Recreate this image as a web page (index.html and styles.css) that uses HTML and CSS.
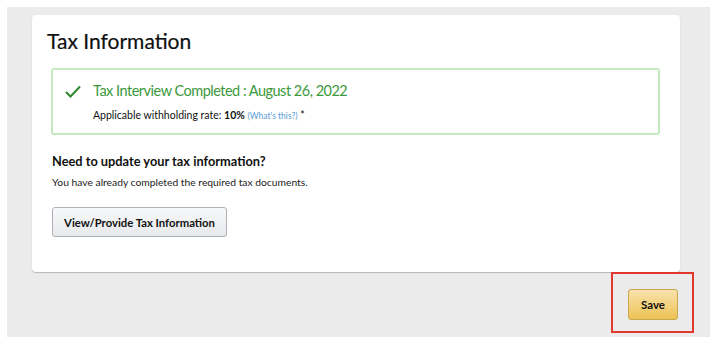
FILE: index.html
```
<!DOCTYPE html>
<html>
<head>
<meta charset="utf-8">
<link rel="stylesheet" href="styles.css">
</head>
<body>
<div class="page">
  <div class="card">
    <h1 class="title">Tax Information</h1>
    <div class="status">
      <div class="status-head">
        <svg class="check" width="16" height="13" viewBox="0 0 16 13"><path d="M1 7 L5.5 11.5 L15 1.5" fill="none" stroke="#2f8a2f" stroke-width="2"/></svg>
        <span class="status-title">Tax Interview Completed : August 26, 2022</span>
      </div>
      <div class="status-rate">Applicable withholding rate: <b>10%</b> <a class="help">(What's this?)</a> *</div>
    </div>
    <div class="update">
      <h2 class="update-title">Need to update your tax information?</h2>
      <p class="update-text">You have already completed the required tax documents.</p>
      <button class="btn">View/Provide Tax Information</button>
    </div>
  </div>
  <div class="footer">
    <button class="save">Save</button>
    <div class="highlight"></div>
  </div>
</div>
</body>
</html>
```
FILE: styles.css
```
* { box-sizing: border-box; }
body {
  margin: 0;
  background: #fff;
  font-family: Lato, "Noto Sans", sans-serif;
  color: #111;
}
.page {
  margin: 7px 0 0 7px;
  width: 703px;
  height: 330px;
  background: #ebebeb;
  padding: 8px 30px 0 25px;
}
.card {
  background: #fff;
  height: 257px;
  border-radius: 4px;
  box-shadow: 0 1px 1px rgba(0,0,0,0.22);
  padding: 12px 20px 0 15px;
}
.title {
  margin: 0;
  font-size: 21px;
  line-height: 27px;
  font-weight: 400;
  color: #0f1111;
  -webkit-text-stroke: 0.2px #0f1111;
}
.status {
  margin: 14px 0 0 4px;
  height: 67px;
  border: 2px solid #c4eabf;
  border-radius: 3px;
  padding: 11px 0 0 12px;
}
.status-head {
  display: flex;
  align-items: center;
  gap: 12px;
}
.check { display: block; }
.status-title {
  font-size: 14.5px;
  letter-spacing: -0.5px;
  line-height: 20px;
  color: #3b993b;
}
.status-rate {
  margin: 7px 0 0 28px;
  font-size: 10.5px;
  line-height: 14px;
  color: #111;
}
.status-rate b { font-weight: 700; }
.help {
  color: #5a9bd8;
  font-size: 8.5px;
}
.update {
  margin: 16px 0 0 5px;
}
.update-title {
  margin: 0;
  font-size: 12.8px;
  line-height: 20px;
  font-weight: 700;
  color: #111;
}
.update-text {
  margin: 4px 0 0;
  font-size: 10.3px;
  line-height: 14px;
  color: #222;
}
.btn {
  margin-top: 18px;
  width: 175px;
  height: 30px;
  border: 1px solid #adb1b8;
  border-radius: 3px;
  background: linear-gradient(#f7f8fa, #e7e9ec);
  font-family: inherit;
  font-size: 11.3px;
  font-weight: 700;
  color: #111;
  padding: 0;
}
.footer {
  position: relative;
  display: flex;
  justify-content: flex-end;
  padding: 17px 2px 0 0;
}
.save {
  width: 50px;
  height: 31px;
  border: 1px solid #c8a74f;
  border-radius: 3px;
  background: linear-gradient(#f8e3ad, #eec254);
  font-family: inherit;
  font-size: 11.5px;
  font-weight: 700;
  color: #111;
  padding: 0;
}
.highlight {
  position: absolute;
  right: -14px;
  top: 0;
  width: 83px;
  height: 61px;
  border: 2px solid #e0382a;
}
```
